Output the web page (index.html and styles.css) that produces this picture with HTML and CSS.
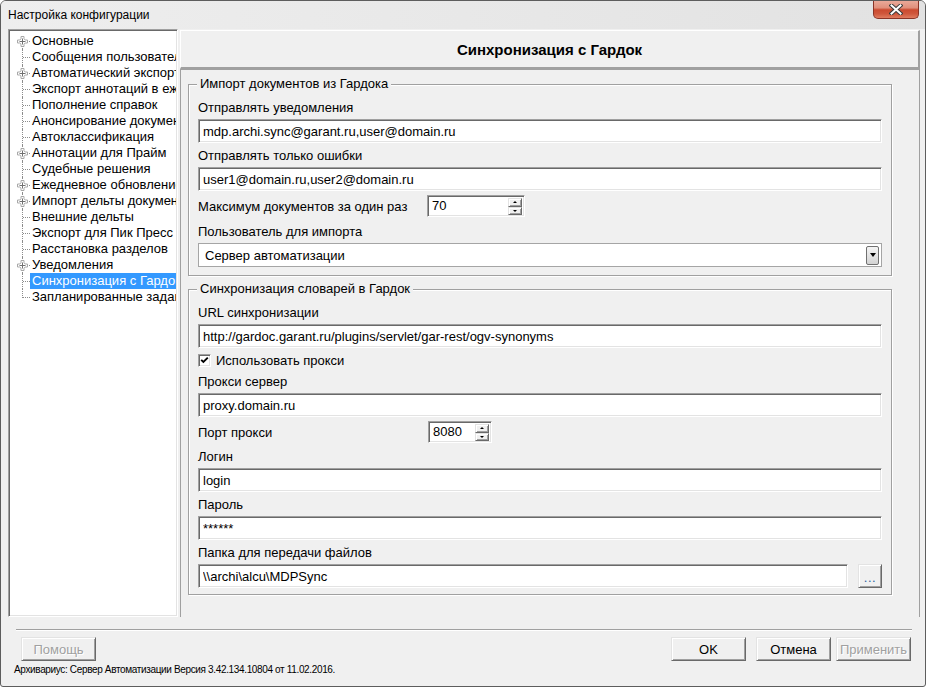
FILE: index.html
```html
<!DOCTYPE html>
<html lang="ru">
<head>
<meta charset="utf-8">
<title>Настройка конфигурации</title>
<link rel="stylesheet" href="styles.css">
</head>
<body>
<div class="window">
  <div class="titlebar">
    <span class="title">Настройка конфигурации</span>
    <button class="close" aria-label="Закрыть">
      <svg width="14" height="11" viewBox="0 0 14 11"><path d="M2.5 1.5l9 8M11.5 1.5l-9 8" stroke="#3a3a3a" stroke-width="4" stroke-linecap="square"/><path d="M2.5 1.5l9 8M11.5 1.5l-9 8" stroke="#fff" stroke-width="2" stroke-linecap="square"/></svg>
    </button>
  </div>
  <div class="client">
    <div class="main">
      <div class="tree">
        <div class="node first"><span class="twig"><svg class="pl" width="11" height="11" viewBox="0 0 11 11"><path d="M4 .5h3v2.3L8.2 4h2.3v3H8.2L7 8.2v2.3H4V8.2L2.8 7H.5V4h2.3L4 2.8z" fill="#fff" stroke="#a8a8a8"/><path d="M5.5 2.5v6M2.5 5.5h6" stroke="#707070"/></svg></span><span class="lbl">Основные</span></div>
        <div class="node"><span class="twig"></span><span class="lbl">Сообщения пользователям</span></div>
        <div class="node"><span class="twig"><svg class="pl" width="11" height="11" viewBox="0 0 11 11"><path d="M4 .5h3v2.3L8.2 4h2.3v3H8.2L7 8.2v2.3H4V8.2L2.8 7H.5V4h2.3L4 2.8z" fill="#fff" stroke="#a8a8a8"/><path d="M5.5 2.5v6M2.5 5.5h6" stroke="#707070"/></svg></span><span class="lbl">Автоматический экспорт</span></div>
        <div class="node"><span class="twig"></span><span class="lbl">Экспорт аннотаций в ежедневное обновление</span></div>
        <div class="node"><span class="twig"></span><span class="lbl">Пополнение справок</span></div>
        <div class="node"><span class="twig"></span><span class="lbl">Анонсирование документов</span></div>
        <div class="node"><span class="twig"></span><span class="lbl">Автоклассификация</span></div>
        <div class="node"><span class="twig"><svg class="pl" width="11" height="11" viewBox="0 0 11 11"><path d="M4 .5h3v2.3L8.2 4h2.3v3H8.2L7 8.2v2.3H4V8.2L2.8 7H.5V4h2.3L4 2.8z" fill="#fff" stroke="#a8a8a8"/><path d="M5.5 2.5v6M2.5 5.5h6" stroke="#707070"/></svg></span><span class="lbl">Аннотации для Прайм</span></div>
        <div class="node"><span class="twig"></span><span class="lbl">Судебные решения</span></div>
        <div class="node"><span class="twig"><svg class="pl" width="11" height="11" viewBox="0 0 11 11"><path d="M4 .5h3v2.3L8.2 4h2.3v3H8.2L7 8.2v2.3H4V8.2L2.8 7H.5V4h2.3L4 2.8z" fill="#fff" stroke="#a8a8a8"/><path d="M5.5 2.5v6M2.5 5.5h6" stroke="#707070"/></svg></span><span class="lbl">Ежедневное обновление</span></div>
        <div class="node"><span class="twig"><svg class="pl" width="11" height="11" viewBox="0 0 11 11"><path d="M4 .5h3v2.3L8.2 4h2.3v3H8.2L7 8.2v2.3H4V8.2L2.8 7H.5V4h2.3L4 2.8z" fill="#fff" stroke="#a8a8a8"/><path d="M5.5 2.5v6M2.5 5.5h6" stroke="#707070"/></svg></span><span class="lbl">Импорт дельты документов</span></div>
        <div class="node"><span class="twig"></span><span class="lbl">Внешние дельты</span></div>
        <div class="node"><span class="twig"></span><span class="lbl">Экспорт для Пик Пресс</span></div>
        <div class="node"><span class="twig"></span><span class="lbl">Расстановка разделов</span></div>
        <div class="node"><span class="twig"><svg class="pl" width="11" height="11" viewBox="0 0 11 11"><path d="M4 .5h3v2.3L8.2 4h2.3v3H8.2L7 8.2v2.3H4V8.2L2.8 7H.5V4h2.3L4 2.8z" fill="#fff" stroke="#a8a8a8"/><path d="M5.5 2.5v6M2.5 5.5h6" stroke="#707070"/></svg></span><span class="lbl">Уведомления</span></div>
        <div class="node selected"><span class="twig"></span><span class="lbl">Синхронизация с Гардок</span></div>
        <div class="node last"><span class="twig"></span><span class="lbl">Запланированные задания</span></div>
      </div>

      <div class="page">
        <div class="page-head">Синхронизация с Гардок</div>
        <div class="page-body">
          <div class="group">
            <span class="legend">Импорт документов из Гардока</span>
            <div class="label">Отправлять уведомления</div>
            <input class="edit" type="text" value="mdp.archi.sync@garant.ru,user@domain.ru">
            <div class="label">Отправлять только ошибки</div>
            <input class="edit" type="text" value="user1@domain.ru,user2@domain.ru">
            <div class="row spin-row">
              <span class="row-label w229">Максимум документов за один раз</span>
              <div class="spin wide"><span class="val">70</span><span class="btns"><span class="sb"><i class="up"></i></span><span class="sb"><i class="down"></i></span></span></div>
            </div>
            <div class="label">Пользователь для импорта</div>
            <div class="combo"><span>Сервер автоматизации</span><span class="dd"><i></i></span></div>
          </div>

          <div class="group g2">
            <span class="legend">Синхронизация словарей в Гардок</span>
            <div class="label">URL синхронизации</div>
            <input class="edit" type="text" value="http://gardoc.garant.ru/plugins/servlet/gar-rest/ogv-synonyms">
            <div class="row check-row">
              <span class="chk"><svg width="9" height="9" viewBox="0 0 9 9"><path d="M1.2 3.8l2.2 2.2 4.4-4.4" fill="none" stroke="#000" stroke-width="1.9"/></svg></span>
              <span>Использовать прокси</span>
            </div>
            <div class="label">Прокси сервер</div>
            <input class="edit" type="text" value="proxy.domain.ru">
            <div class="row spin-row port">
              <span class="row-label w230">Порт прокси</span>
              <div class="spin narrow"><span class="val">8080</span><span class="btns"><span class="sb"><i class="up"></i></span><span class="sb"><i class="down"></i></span></span></div>
            </div>
            <div class="label">Логин</div>
            <input class="edit" type="text" value="login">
            <div class="label">Пароль</div>
            <input class="edit" type="text" value="******">
            <div class="label">Папка для передачи файлов</div>
            <div class="row folder-row">
              <input class="edit" type="text" value="\\archi\alcu\MDPSync">
              <button class="btn3d dots">...</button>
            </div>
          </div>
        </div>
      </div>
    </div>

    <div class="sep"></div>
    <div class="buttons">
      <button class="btn3d push disabled">Помощь</button>
      <span class="spacer"></span>
      <button class="btn3d push">OK</button>
      <button class="btn3d push cancel">Отмена</button>
      <button class="btn3d push disabled apply">Применить</button>
    </div>
    <div class="status">Архивариус: Сервер Автоматизации Версия 3.42.134.10804 от 11.02.2016.</div>
  </div>
</div>
</body>
</html>
```

FILE: styles.css
```css
* { box-sizing: border-box; }
html, body { margin: 0; padding: 0; background: #ffffff; }
body {
  font-family: "Liberation Sans", Arial, sans-serif;
  font-size: 13px;
  color: #000;
}

.window {
  width: 926px;
  height: 687px;
  border: 1px solid #5d5d5d;
  border-radius: 6px 6px 3px 3px;
  background: #f0f0f0;
  display: flex;
  flex-direction: column;
  overflow: hidden;
}

.titlebar {
  flex: none;
  height: 28px;
  display: flex;
  align-items: flex-start;
  background: linear-gradient(to right, #eeeeee, #e2e2e2);
}
.title {
  font-size: 12px;
  line-height: 28px;
  padding-left: 7px;
}
.close {
  margin-left: auto;
  margin-right: 6px;
  width: 46px;
  height: 18px;
  padding: 0;
  border: 1px solid #8a3427;
  border-top: none;
  border-radius: 0 0 5px 5px;
  background: linear-gradient(#eaa999 0%, #e0907c 40%, #cb4a30 52%, #cf573c 75%, #e07b5f 100%);
  display: flex;
  align-items: center;
  justify-content: center;
}

.client {
  flex: 1;
  padding: 0 5px 0 7px;
  display: flex;
  flex-direction: column;
}

.main {
  display: flex;
  gap: 2px;
  height: 588px;
  flex: none;
}

/* ---------- tree ---------- */
.tree {
  width: 170px;
  height: 588px;
  background: #fff;
  border: 1px solid;
  border-color: #a0a0a0 #ffffff #ffffff #a0a0a0;
  box-shadow: inset 1px 1px 0 #696969, inset -1px -1px 0 #e3e3e3;
  padding: 3px 1px 0 7px;
  overflow: hidden;
}
.node {
  display: flex;
  height: 16px;
  line-height: 16px;
  white-space: nowrap;
}
.twig {
  flex: none;
  position: relative;
  width: 14px;
  height: 16px;
  display: flex;
  align-items: center;
  padding-left: 1px;
}
.twig::before {
  content: "";
  position: absolute;
  left: 6px;
  top: 0;
  bottom: 0;
  border-left: 1px dotted #8c8c8c;
}
.twig::after {
  content: "";
  position: absolute;
  left: 7px;
  top: 8px;
  width: 7px;
  border-top: 1px dotted #8c8c8c;
}
.node.first .twig::before { top: 8px; }
.node.last .twig::before { bottom: 7px; }
.pl { position: relative; z-index: 1; }
.lbl {
  flex: 1;
  min-width: 0;
  overflow: hidden;
  padding-left: 2px;
}
.node.selected .lbl {
  background: #3399ff;
  color: #fff;
}

/* ---------- page ---------- */
.page {
  width: 740px;
  margin-top: 1px;
  display: flex;
  flex-direction: column;
}
.page-head {
  flex: none;
  height: 39px;
  border-style: solid;
  border-width: 1px 2px 2px 1px;
  border-color: #ffffff #a0a0a0 #a0a0a0 #ffffff;
  font-weight: bold;
  font-size: 15px;
  display: flex;
  align-items: center;
  justify-content: center;
}
.page-body {
  flex: 1;
  border: 1px solid #a0a0a0;
  border-bottom: none;
  padding-left: 7px;
}

.group {
  position: relative;
  width: 704px;
  margin-top: 14px;
  border: 1px solid #a0a0a0;
  box-shadow: inset 1px 1px 0 #fff, 1px 1px 0 #fff;
  padding: 14px 9px 8px 9px;
}
.group.g2 {
  margin-top: 13px;
  padding-bottom: 6px;
}
.legend {
  position: absolute;
  top: -9px;
  left: 8px;
  padding: 0 3px;
  line-height: 16px;
  background: #f0f0f0;
}

.label {
  height: 16px;
  line-height: 16px;
  padding-top: 1px;
  margin-bottom: 4px;
  white-space: nowrap;
}

.edit {
  display: block;
  width: 100%;
  height: 24px;
  margin: 0 0 4px 0;
  padding: 1px 4px 0 4px;
  font: inherit;
  color: #000;
  background: #fff;
  border: 1px solid;
  border-color: #a0a0a0 #ffffff #ffffff #a0a0a0;
  box-shadow: inset 1px 1px 0 #696969, inset -1px -1px 0 #e3e3e3;
  outline: none;
}

.row {
  display: flex;
  align-items: center;
}
.spin-row {
  height: 22px;
  margin-bottom: 6px;
}
.spin-row.port {
  margin-top: 1px;
  margin-bottom: 5px;
}
.row-label { flex: none; white-space: nowrap; padding-top: 1px; }
.w229 { width: 229px; }
.w230 { width: 230px; }

.spin {
  display: flex;
  height: 22px;
  background: #fff;
  border: 1px solid;
  border-color: #a0a0a0 #ffffff #ffffff #a0a0a0;
  box-shadow: inset 1px 1px 0 #696969, inset -1px -1px 0 #e3e3e3;
  padding: 1px;
}
.spin.wide { width: 98px; }
.spin.narrow { width: 64px; }
.spin .val {
  flex: 1;
  padding-left: 3px;
  line-height: 18px;
}
.spin .btns {
  flex: none;
  width: 15px;
  display: flex;
  flex-direction: column;
  padding: 1px 1px 0 0;
}
.sb {
  flex: 1;
  display: flex;
  align-items: center;
  justify-content: center;
  background: #f0f0f0;
  border: 1px solid;
  border-color: #e3e3e3 #696969 #696969 #e3e3e3;
  box-shadow: inset 1px 1px 0 #fff, inset -1px -1px 0 #a0a0a0;
}
.sb i {
  display: block;
  width: 0;
  height: 0;
  border-left: 2px solid transparent;
  border-right: 2px solid transparent;
}
.sb i.up { border-bottom: 2px solid #000; }
.sb i.down { border-top: 2px solid #000; }

.combo {
  height: 24px;
  display: flex;
  align-items: center;
  padding: 0 2px 0 6px;
  background: #fff;
  border: 1px solid #a5a5a5;
  white-space: nowrap;
}
.dd {
  margin-left: auto;
  width: 13px;
  height: 19px;
  border: 1px solid #707070;
  border-radius: 2px;
  background: linear-gradient(#f4f4f4, #e4e4e4 50%, #d2d2d2);
  display: flex;
  align-items: center;
  justify-content: center;
}
.dd i {
  display: block;
  width: 0;
  height: 0;
  border-left: 3.5px solid transparent;
  border-right: 3.5px solid transparent;
  border-top: 4px solid #000;
}

.check-row {
  height: 16px;
  margin-bottom: 5px;
  gap: 5px;
}
.chk {
  width: 13px;
  height: 13px;
  background: #fff;
  border: 1px solid;
  border-color: #a0a0a0 #ffffff #ffffff #a0a0a0;
  box-shadow: inset 1px 1px 0 #696969, inset -1px -1px 0 #e3e3e3;
  display: flex;
  align-items: center;
  justify-content: center;
}

.folder-row .edit {
  width: 650px;
  margin: 0;
}

.btn3d {
  font: inherit;
  color: #000;
  background: #f0f0f0;
  padding: 0;
  border: 1px solid;
  border-color: #e3e3e3 #696969 #696969 #e3e3e3;
  box-shadow: inset 1px 1px 0 #fff, inset -1px -1px 0 #a0a0a0;
}
.dots {
  width: 24px;
  height: 24px;
  margin-left: 10px;
  color: #2f5f9e;
  line-height: 26px;
  letter-spacing: 0.5px;
}

.sep {
  flex: none;
  margin: 12px 8px 0 8px;
  border-top: 1px solid #a0a0a0;
  border-bottom: 1px solid #ffffff;
}

.buttons {
  flex: none;
  display: flex;
  margin-top: 6px;
  padding: 0 9px 0 13px;
}
.spacer { flex: 1; }
.push {
  width: 75px;
  height: 24px;
}
.cancel { margin-left: 10px; }
.apply { margin-left: 5px; }
.disabled {
  color: #a0a0a0;
  text-shadow: 1px 1px 0 #fff;
}

.status {
  margin-top: 3px;
  padding-left: 6px;
  font-size: 10px;
  line-height: 12px;
  letter-spacing: -0.35px;
  white-space: nowrap;
}
```
